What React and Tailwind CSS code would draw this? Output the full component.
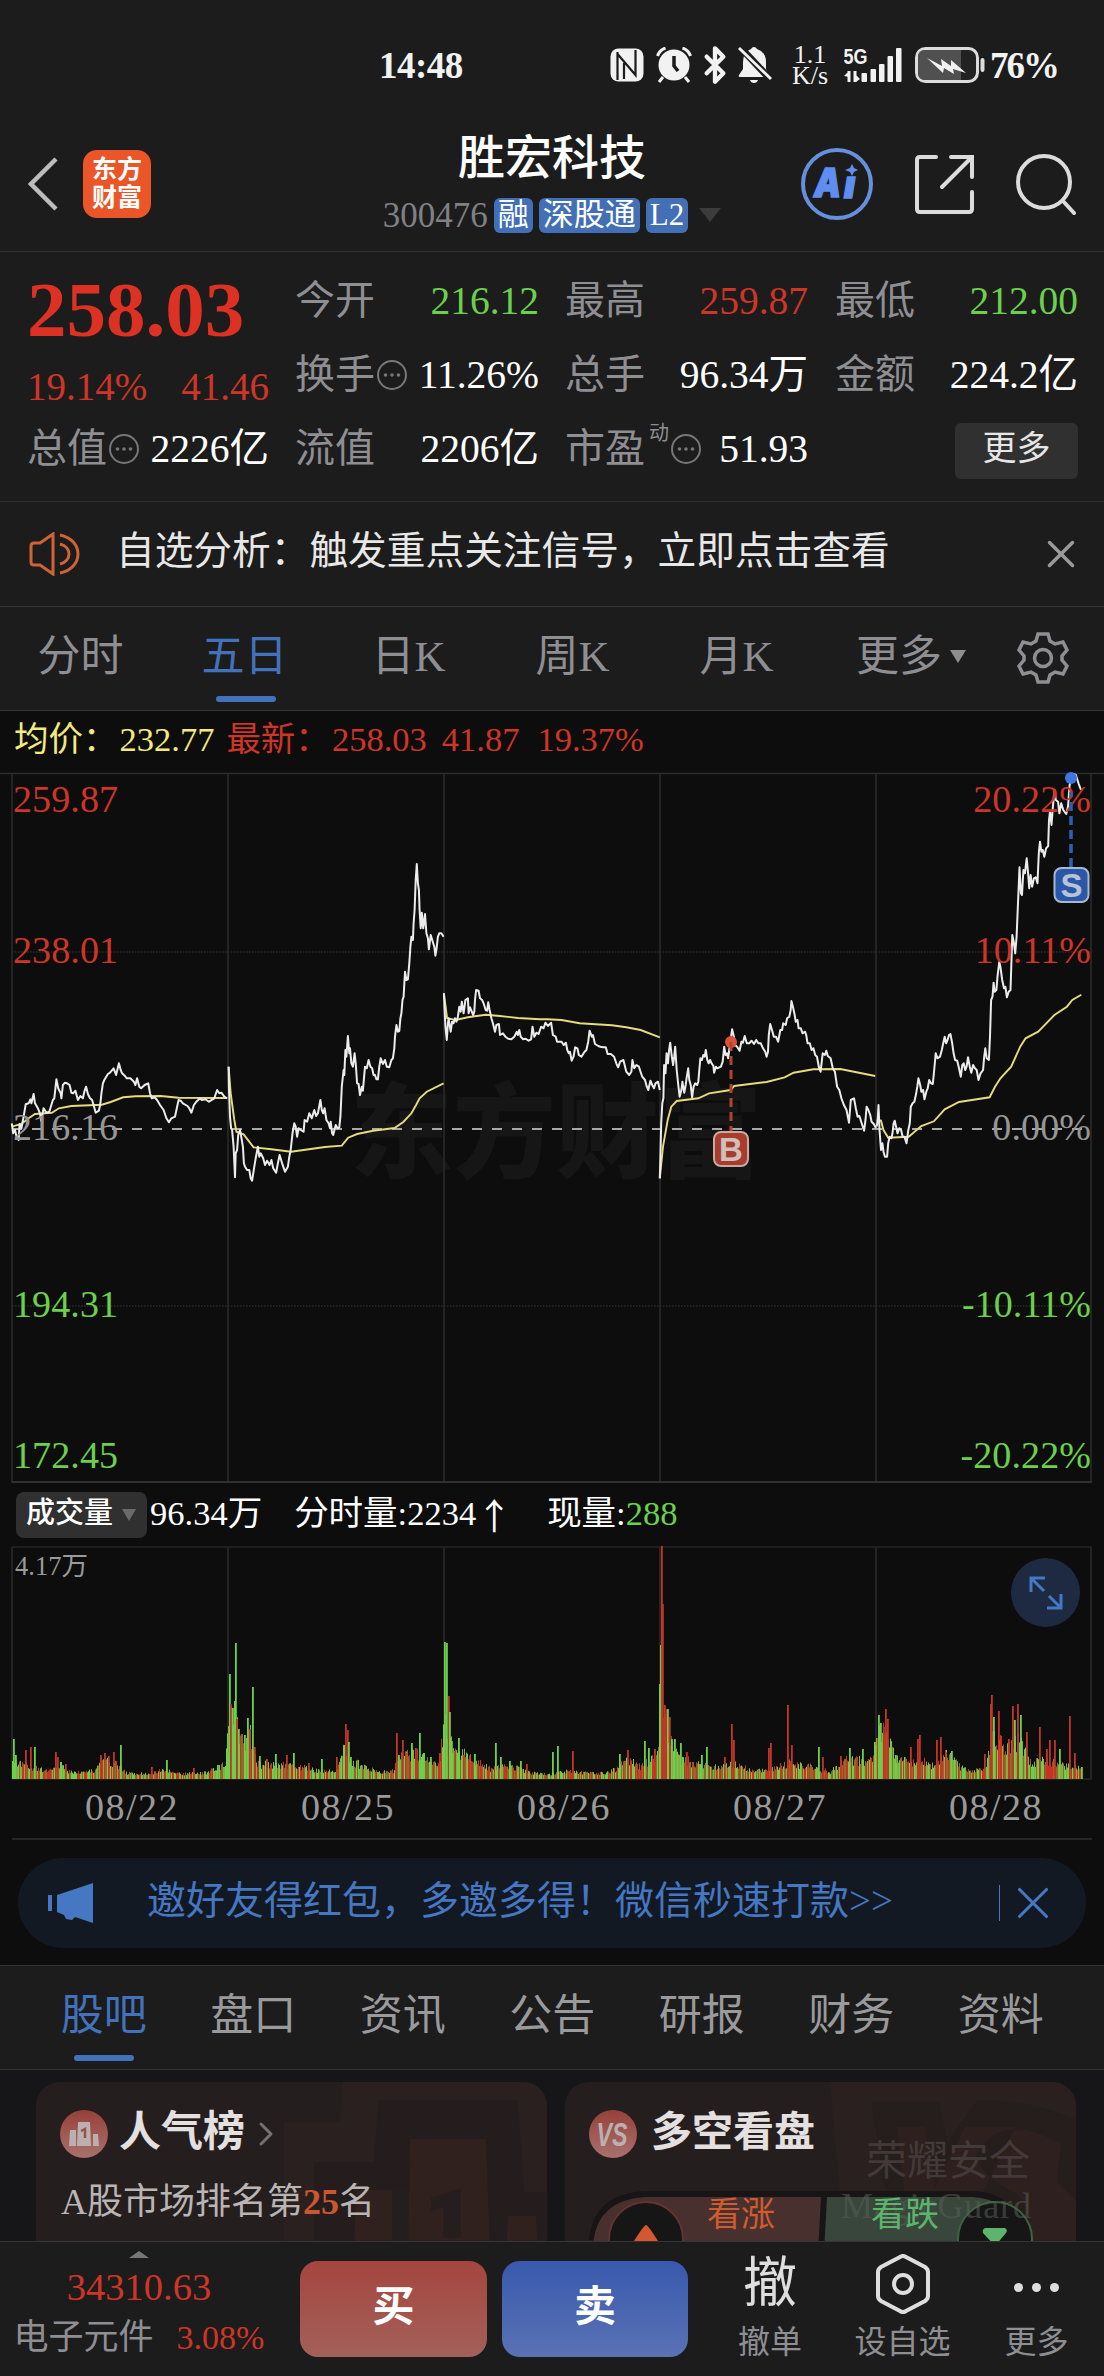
import React from 'react';
import { Bluetooth, X, ChevronRight } from 'lucide-react';

const RED = '#cf3527';
const GREEN = '#6bd04c';

const CHART_TOP = 770;

// price traces, pairs of x,y in the plot's own half-pane units
const LEFT = { origin: 0, unit: 0.35714 };
const RIGHT = { origin: 540, unit: 0.35969 };

const priceSeries = [
  [[LEFT, '33,1060 37,1090 42,1080 46,1098 52,1110 55,1062 60,1075 66,1040 72,1003 80,1000 85,988 88,1000 94,972 98,1000 106,1015 112,1030 115,1052 122,1015 130,1028 138,1025 148,990 152,985 158,928 163,955 170,970 172,985 176,945 182,938 188,940 195,945 200,968 205,970 211,962 218,990 225,978 232,985 236,965 241,950 246,972 252,985 258,990 262,1005 268,1028 277,1022 281,1000 284,970 288,940 292,930 302,912 308,908 318,895 325,915 333,880 338,900 342,910 350,918 355,925 365,925 375,935 379,945 384,925 390,950 395,955 405,945 415,940 420,970 425,985 433,982 440,990 448,1005 458,1020 466,1045 473,1057 480,1045 490,1040 495,1015 500,990 506,992 512,1000 525,1008 530,1015 536,1028 543,1005 550,995 560,985 565,990 575,988 585,995 600,985 608,960 614,970 620,968 628,980 636,985']],
  [[LEFT, '640,890 641,950 644,1040 647,1075 650,1080 654,1130 658,1222 660,1150 664,1140 667,1095 672,1080 677,1110 680,1130 683,1180 686,1190 692,1200 698,1200 702,1225 706,1232 712,1190 716,1165 722,1130 726,1160 730,1150 737,1165 742,1185 748,1172 755,1185 760,1170 765,1195 773,1208 778,1180 783,1155 790,1180 798,1205 806,1190 810,1160 814,1140 819,1090 824,1060 828,1070 832,1100 836,1075 842,1080 850,1085 853,1050 860,1055 866,1030 873,1045 880,1020 885,1038 890,1030 897,990 901,1020 905,1030 909,1015 914,1050 920,1060 924,1075 926,1055 930,1090 933,1095 940,1065 945,1075 950,1072 953,1040 957,950 962,900 964,915 967,840 970,860 974,798 978,850 980,835 984,880 988,890 993,850 996,880 1000,940 1004,942 1008,975 1013,950 1016,962 1022,890 1027,895 1032,870 1037,890 1042,895 1046,915 1050,915 1054,928 1058,928 1062,890 1066,865 1072,882 1078,870 1083,890 1090,892 1096,870 1100,865 1104,835 1106,800 1110,765 1114,785 1118,783 1121,745 1124,730 1127,690 1130,680 1134,605 1138,630 1142,628 1146,580 1149,530 1152,500 1156,510 1158,460 1161,420 1164,330 1167,282 1170,340 1173,360 1175,420 1178,475 1181,428 1185,475 1190,432 1194,490 1198,505 1201,538 1206,495 1213,520 1216,530 1219,557 1222,540 1226,500 1230,490 1236,490 1242,500']],
  [[LEFT, '1243,670 1245,720 1247,770 1251,810 1254,760 1256,745 1262,785 1266,755 1270,760 1274,745 1278,755 1282,740 1286,710 1290,725 1293,695 1298,730 1303,690 1310,685 1312,730 1316,712 1325,735 1328,725 1330,690 1333,660 1340,662 1344,685 1350,690 1354,700 1360,720 1364,722 1367,697 1371,720 1376,745 1380,760 1386,785 1390,765 1397,762 1400,795 1408,790 1415,800 1423,806 1432,808 1440,800 1447,785 1450,795 1454,780 1458,800 1465,808 1472,806 1480,812 1487,808 1491,770 1496,800 1502,788 1508,792 1515,770 1522,775 1527,758 1534,768 1543,758 1548,795 1556,800 1560,815'],
   [RIGHT, '60,815 66,825 72,818 76,840 80,850 83,845 88,872 93,860 98,832 104,835 108,855 115,860 124,845 129,840 134,815 138,782 144,800 147,795 153,822 162,828 168,830 175,832 183,832 188,852 197,852 206,860 212,880 217,892 223,875 232,870 240,905 248,915 254,905 257,870 262,895 268,885 275,890 284,920 292,930 297,950 301,960 307,932 312,945 317,955 321,940 328,935 333,960']],
  [[RIGHT, '333,1225 335,1150 337,1060 340,1000 343,985 345,885 349,910 352,850 356,880 359,840 362,818 366,855 370,885 373,860 376,830 380,900 384,940 388,980 393,960 396,935 401,968 405,945 408,920 412,895 415,930 419,945 423,982 427,950 432,940 437,945 440,935 443,900 446,865 450,870 454,855 458,860 461,840 465,870 469,880 473,870 477,880 482,888 484,908 489,890 493,895 503,890 508,875 512,830 516,855 520,850 523,865 530,810 534,778 539,800 542,825 548,830 555,842 560,815 564,818 569,798 575,820 582,820 588,812 595,822 601,810 607,820 614,820 620,835 626,845 630,860 634,845 636,795 640,762 645,780 650,800 656,800 662,815 668,780 673,780 676,760 683,765 687,745 693,740 697,720 699,693 703,710 708,735 711,755 716,750 719,775 725,775 730,790 737,785 740,795 744,820 750,820 755,840 760,835 765,855 770,860 775,890 780,905 786,850 792,855 796,842 800,858 808,865 814,895 820,905 826,950 832,960 838,985 845,1005 852,1020 859,1058 864,990 873,985 878,1015 883,1040 888,1038 893,1055 901,1082 905,1050 908,1010 913,1020 918,1035 922,1055 928,1062 934,1075']],
  [[RIGHT, '936,1070 939,1050 941,1005 944,1080 948,1140 952,1120 955,1145 959,1160 965,1160 968,1120 972,1100 977,1105 980,1090 983,1060 986,1052 990,1070 994,1090 999,1075 1004,1080 1008,1100 1013,1100 1019,1120 1024,1080 1028,1060 1031,1010 1036,1000 1041,995 1046,970 1049,950 1052,925 1057,945 1060,965 1065,960 1069,988 1074,965 1078,955 1082,930 1087,940 1092,942 1096,900 1100,850 1105,865 1112,860 1117,840 1121,820 1125,800 1129,820 1133,810 1137,795 1141,792 1146,820 1150,850 1154,870 1160,872 1165,895 1170,920 1174,885 1178,880 1182,900 1186,890 1190,862 1195,890 1199,908 1204,885 1209,895 1214,900 1219,930 1225,910 1232,900 1235,860 1238,835 1242,865 1248,870 1251,800 1254,690 1258,680 1261,638 1264,665 1269,660 1272,620 1277,575 1280,590 1285,630 1290,655 1294,650 1298,682 1303,665 1308,660 1311,560 1313,495 1317,515 1321,550 1325,500 1328,420 1331,350 1333,292 1337,370 1340,375 1344,300 1348,310 1353,265 1357,310 1360,355 1364,315 1368,350 1373,325 1378,322 1383,340 1385,290 1387,245 1390,215 1394,245 1398,240 1402,260 1407,235 1413,228 1415,150 1418,125 1422,165 1426,110 1430,60 1434,90 1440,95 1444,130 1449,100 1455,120 1463,132 1468,110 1472,50 1476,20 1483,12 1490,15 1497,40 1504,60']],
];

const averageSeries = [
  [[LEFT, '33,1070 60,1062 80,1045 98,1032 145,1028 165,1015 200,1008 285,1004 310,996 345,982 380,979 450,978 500,983 636,984']],
  [[LEFT, '640,890 646,970 656,1050 662,1085 682,1093 710,1132 760,1138 815,1145 850,1140 910,1131 957,1127 966,1115 975,1103 1000,1092 1045,1082 1105,1074 1130,1055 1152,1030 1165,1005 1175,985 1195,965 1242,940']],
  [[LEFT, '1243,670 1252,745 1275,750 1310,742 1360,734 1400,738 1450,744 1512,748'], [RIGHT, '20,748 60,750 110,760 200,766 240,772 280,780 333,802']],
  [[RIGHT, '333,1225 342,1130 355,1050 365,1010 380,993 440,985 470,970 530,960 540,948 630,936 680,922 705,908 760,898 835,897 932,918']],
  [[RIGHT, '936,1050 948,1052 955,1080 968,1103 1025,1100 1060,1068 1095,1054 1125,1018 1165,996 1250,982 1265,950 1280,925 1310,890 1335,830 1350,805 1385,785 1430,735 1465,710 1480,690 1505,674']],
];

const toPoints = (parts) =>
  parts
    .flatMap(([pane, text]) =>
      text.split(' ').map((pair) => {
        const [x, y] = pair.split(',').map(Number);
        return `${(pane.origin + x * pane.unit).toFixed(1)},${(y / 3 + CHART_TOP - 772).toFixed(1)}`;
      })
    )
    .join(' ');

// typical volume along the axis: x, height
const volumeBase = [
  [12, 16], [45, 8], [60, 14], [68, 7], [95, 8], [100, 18], [118, 14], [125, 6], [145, 5], [165, 9], [180, 5], [205, 6],
  [225, 14], [229, 65], [237, 50], [243, 32], [250, 42], [256, 18], [262, 14], [275, 15], [300, 12], [320, 8], [335, 7],
  [344, 30], [350, 18], [370, 10], [378, 6], [393, 8], [398, 20], [415, 26], [430, 16], [440, 18], [444, 70], [449, 35],
  [460, 26], [475, 18], [490, 10], [510, 13], [530, 6], [550, 5], [570, 8], [585, 6], [605, 6], [617, 10], [627, 20],
  [640, 12], [657, 22], [660, 90], [665, 60], [672, 35], [680, 20], [700, 14], [715, 12], [735, 14], [755, 8], [765, 8],
  [790, 16], [810, 12], [830, 7], [845, 18], [872, 18], [878, 48], [888, 40], [895, 20], [910, 16], [920, 18], [935, 12],
  [945, 25], [960, 12], [970, 8], [985, 10], [991, 40], [1000, 35], [1010, 30], [1020, 40], [1030, 16], [1045, 18],
  [1060, 14], [1082, 10],
];

const volumeSpikes =
  '13,40,g 15,24,g 25,29,r 30,32,r 34,32,g 55,27,r 57,22,r 65,15,r 100,24,r 104,26,r 108,23,r 113,27,r 120,34,g 151,12,r 166,19,g 193,11,r 217,14,g 227,26,g 229,105,g 230,75,r 232,71,g 234,78,g 235,136,g 236,60,r 238,50,g 244,44,g 247,61,g 249,50,r 252,92,g 254,32,r 259,23,g 266,20,r 275,25,g 286,24,r 293,26,g 308,16,r 321,20,g 336,22,r 343,33,g 345,55,r 347,49,r 348,37,g 350,22,g 396,46,r 398,24,g 402,39,r 405,26,r 411,36,g 415,31,r 419,46,g 423,26,g 430,22,g 439,26,r 443,46,g 444,137,g 446,136,g 448,83,r 449,67,g 451,38,g 458,41,g 463,24,r 474,25,g 495,36,g 500,22,g 509,18,g 520,18,g 526,15,r 552,27,g 557,33,g 572,28,r 619,25,g 627,29,r 644,38,g 648,31,g 654,30,r 659,95,g 660,134,g 661,233,r 662,175,r 664,74,r 665,65,r 667,70,g 669,62,r 671,40,g 674,40,g 680,36,g 686,27,r 701,24,g 706,32,g 724,22,r 731,55,r 733,39,r 768,31,r 770,36,r 787,74,r 791,34,r 818,32,g 822,22,r 840,23,r 849,31,g 862,30,g 874,37,g 878,64,g 880,56,g 883,52,r 885,70,r 887,60,r 895,24,g 910,32,r 917,40,r 919,44,r 936,39,r 940,42,r 945,27,r 951,28,g 984,25,r 990,75,r 991,84,r 993,62,g 998,68,r 1000,40,r 1008,40,r 1012,73,r 1014,59,g 1017,75,r 1020,64,g 1026,47,r 1039,52,r 1046,30,r 1049,39,r 1054,39,r 1059,30,g 1069,63,r 1074,26,r 1081,12,g'
    .split(' ')
    .map((s) => s.split(','));

const noise = (i) => {
  const n = Math.sin(i * 127.1 + 11.7) * 43758.5453;
  return n - Math.floor(n);
};

const baseAt = (x) => {
  const i = Math.max(1, volumeBase.findIndex(([px]) => px >= x));
  const [x0, h0] = volumeBase[i - 1];
  const [x1, h1] = volumeBase[i];
  return h0 + ((x - x0) / (x1 - x0)) * (h1 - h0);
};

const barColors = ['#d0301f', '#6bd04c', '#84b03f', '#8f6a2b'];

const bars = Array.from({ length: 1069 }, (_, i) => {
  const x = 12 + i;
  return { x, h: baseAt(x) * (0.7 + noise(i) * 0.6), color: barColors[Math.floor(noise(i + 5000) * 4)] };
});

const gridX = [12, 228, 444, 660, 876, 1091];

const Dots = () => (
  <svg viewBox="0 0 30 30" className="w-[30px] h-[30px] ml-[2px] shrink-0" fill="none" stroke="#77777a" strokeWidth="2">
    <circle cx="15" cy="15" r="14" />
    <g fill="#77777a" stroke="none">
      <circle cx="8.500" cy="15" r="1.800" />
      <circle cx="15" cy="15" r="1.800" />
      <circle cx="21.500" cy="15" r="1.800" />
    </g>
  </svg>
);

const Stat = ({ label, value, color = 'text-white', info, sup }) => (
  <div className="flex items-center justify-between h-[74px] text-[40px]">
    <span className="flex items-center text-[#8e8e93] whitespace-nowrap">
      {label}
      {sup && <span className="text-[20px] ml-1 mb-8">{sup}</span>}
      {info && <Dots />}
    </span>
    <span className={`${color} whitespace-nowrap pt-[2px] text-[39.500px]`}>{value}</span>
  </div>
);

const StatusBar = () => (
  <div className="h-[130px] flex items-center pl-[379px] pr-[46px] text-[#f2f2f2]">
    <span className="text-[37px] font-bold tracking-[-0.5px]">14:48</span>
    <div className="ml-auto flex items-center">
      <svg viewBox="0 0 34 34" className="w-[34px] h-[34px]">
        <rect x="0.500" y="0.500" width="33" height="33" rx="8" fill="#f2f2f2" />
        <path d="M7.500 4v28M7.500 6l18 21V2M14 31V15" fill="none" stroke="#1c1c1c" strokeWidth="2.200" />
      </svg>
      <svg viewBox="0 0 36 36" className="w-[36px] h-[36px] ml-[12px]">
        <circle cx="18" cy="18" r="15.500" fill="#f2f2f2" />
        <path d="M7 30l-4 5M29 30l4 5M1.500 9q2-6 8-8M34.500 9q-2-6-8-8" stroke="#f2f2f2" strokeWidth="3" fill="none" />
        <path d="M18 9v10l4 5" stroke="#1c1c1c" strokeWidth="3.500" fill="none" />
      </svg>
      <Bluetooth className="w-[40px] h-[40px] ml-[3px]" strokeWidth={2.600} />
      <svg viewBox="0 0 34 38" className="w-[34px] h-[38px] ml-[3px]">
        <path d="M16 1q2 0 3 2 9 3 9 13v7l3 6q0 2-2 2H2q-2 0-1-2l4-6v-7q0-10 8-13 1-2 3-2zM12 34h8q-1 3-4 3t-4-3z" fill="#f2f2f2" />
        <path d="M0-1l34 36" stroke="#1c1c1c" strokeWidth="7" />
        <path d="M1 2l32 31" stroke="#f2f2f2" strokeWidth="3" />
      </svg>
      <div className="flex flex-col items-center text-[26px] leading-[19px] gap-[2px] ml-[18px] w-[40px]">
        <span className="h-[19px]">1.1</span>
        <span className="h-[19px]">K/s</span>
      </div>
      <svg viewBox="0 0 58 36" className="w-[58px] h-[36px] ml-[14px]" fill="#f2f2f2">
        <text x="-0.500" y="17" fontSize="22" fontWeight="bold" fontFamily="Liberation Sans" textLength="24" lengthAdjust="spacingAndGlyphs">5G</text>
        <path d="M3.500 24h3v11h-3zM0 29l5-5v6zM9.500 24h3v11h-3zM12 35v-7l4 4z" />
        <rect x="17.500" y="26" width="5.500" height="9" rx="1" />
        <rect x="26.500" y="22" width="5.500" height="13" rx="1" />
        <rect x="35" y="17" width="5.500" height="18" rx="1" />
        <rect x="43.500" y="9" width="5.500" height="26" rx="1" />
        <rect x="52" y="1" width="5.500" height="34" rx="1" />
      </svg>
      <svg viewBox="0 0 71 36" className="w-[71px] h-[36px] ml-[13px]">
        <rect x="1.500" y="1.500" width="61" height="33" rx="9" fill="#222" stroke="#dcdcdc" strokeWidth="3" />
        <path d="M10 3h36v30H10q-7 0-7-7V10q0-7 7-7z" fill="#505050" />
        <rect x="65.500" y="11" width="4" height="14" rx="2" fill="#dcdcdc" />
        <path d="M12 11l15 8-1-7 10 7 0-6 15 13-13-4 1 5-10-6-1 5z" fill="#f2f2f2" />
      </svg>
      <span className="text-[37px] font-bold tracking-[-2px] ml-1">76%</span>
    </div>
  </div>
);

const Tag = ({ children }) => (
  <span className="h-[35px] px-[4px] rounded-[6px] bg-[#426fb5] text-white text-[31px] leading-[33px] ml-[6px]">{children}</span>
);

const Header = () => (
  <div className="h-[122px] flex items-center justify-between px-[28px] border-b border-[#333]">
    <div className="flex items-center w-[300px] mt-[-14px]">
      <svg viewBox="0 0 30 54" className="w-[30px] h-[54px]" fill="none" stroke="#bdbdbd" strokeWidth="4.500">
        <path d="M28 2L3 27l25 25" />
      </svg>
      <div className="ml-[25px] w-[68px] h-[68px] rounded-[14px] bg-[#ea5628] text-white text-[25px] font-bold leading-[28px] flex flex-col items-center justify-center">
        <span>东方</span>
        <span>财富</span>
      </div>
    </div>
    <div className="flex flex-col items-center mt-[-10px]">
      <div className="text-[47px] leading-[56px] text-white mt-[-6px] font-medium">胜宏科技</div>
      <div className="flex items-center h-[40px] mt-[9px] text-[35px] text-[#808085]">
        300476
        <Tag>融</Tag>
        <Tag>深股通</Tag>
        <Tag>L2</Tag>
        <span className="ml-[11px] border-x-[11px] border-x-transparent border-t-[14px] border-t-[#3c3c3c]" />
      </div>
    </div>
    <div className="flex items-center justify-end w-[300px] mt-[-14px]">
      <svg viewBox="0 0 74 74" className="w-[74px] h-[74px]">
        <circle cx="37" cy="37" r="34" fill="none" stroke="#6690dc" strokeWidth="4" />
        <g fontSize="40" fontWeight="900" fontStyle="italic" fontFamily="Inter" fill="#5f8df0" stroke="#5f8df0" strokeWidth="1.500">
          <text x="14" y="50" textLength="27" lengthAdjust="spacingAndGlyphs">A</text>
          <text x="44" y="51" fontSize="38">ı</text>
        </g>
        <path d="M52 17l2 4 4 2-4 2-2 4-2-4-5-2 5-2z" fill="#5f8df0" />
      </svg>
      <svg viewBox="0 0 60 60" className="w-[60px] h-[60px] ml-[40px]" fill="none" stroke="#dcdcdc" strokeWidth="4" strokeLinecap="round">
        <path d="M22 3H6q-3 0-3 3v49q0 3 3 3h49q3 0 3-3V38M37 3h21v20M57 4L28 33" />
      </svg>
      <svg viewBox="0 0 62 62" className="w-[62px] h-[62px] ml-[42px] mr-[-2px]" fill="none" stroke="#dcdcdc" strokeWidth="4" strokeLinecap="round">
        <circle cx="28" cy="29" r="26" />
        <path d="M47 48l11 12" />
      </svg>
    </div>
  </div>
);

const Quote = () => (
  <div className="h-[250px] border-b border-[#2e2e2e] flex pl-[27px] pr-[25px] pt-[12px]">
    <div className="w-[242px]">
      <div className="h-[90px] text-[79px] leading-[92px] font-bold text-[#dc3123]">258.03</div>
      <div className="h-[58px] flex items-center justify-between pt-[6px] text-[39px] text-[#cf3527]">
        <span>19.14%</span>
        <span>41.46</span>
      </div>
      <Stat label="总值" value="2226亿" info />
    </div>
    <div className="w-[244px] ml-[26px]">
      <Stat label="今开" value="216.12" color="text-[#6bd04c]" />
      <Stat label="换手" value="11.26%" info />
      <Stat label="流值" value="2206亿" />
    </div>
    <div className="w-[243px] ml-[26px]">
      <Stat label="最高" value="259.87" color="text-[#cf3527]" />
      <Stat label="总手" value="96.34万" />
      <Stat label="市盈" value="51.93" sup="动" info />
    </div>
    <div className="w-[243px] ml-[27px]">
      <Stat label="最低" value="212.00" color="text-[#6bd04c]" />
      <Stat label="金额" value="224.2亿" />
      <div className="flex justify-end items-center h-[74px]">
        <button className="w-[123px] h-[56px] rounded-[6px] bg-[#303030] text-[#e6e6e6] text-[34px] pb-1 mt-1">更多</button>
      </div>
    </div>
  </div>
);

const Notice = () => (
  <div className="h-[105px] border-b border-[#333] flex items-center pl-[29px] pr-[28px]">
    <svg viewBox="0 0 52 44" className="w-[52px] h-[44px]" fill="none" stroke="#cf6333" strokeWidth="3">
      <path d="M24 2v40L11 33H5q-3 0-3-3V14q0-3 3-3h6zM31 3c24 5 24 33 0 38M31 12c12 3 12 17 0 20" />
    </svg>
    <span className="ml-[35px] text-[38.700px] text-[#e8e8e8] pb-[6px]">自选分析：触发重点关注信号，立即点击查看</span>
    <X className="ml-auto w-[46px] h-[46px] mr-[-8px] text-[#9a9a9a]" strokeWidth={1.800} />
  </div>
);

const periods = ['分时', '五日', '日K', '周K', '月K'];

const PeriodTabs = () => (
  <div className="h-[104px] border-b border-[#333] flex text-[43px] text-[#8e8e93]">
    {periods.map((p) => (
      <div key={p} className={`w-[164px] flex flex-col items-center ${p === '五日' ? 'text-[#4272bb]' : ''}`}>
        <span className="h-[89px] leading-[100px] mr-[3px]">{p}</span>
        {p === '五日' && <span className="w-[60px] h-[6px] rounded-full bg-[#4272bb]" />}
      </div>
    ))}
    <div className="ml-[36px] flex items-center pb-1 w-[161px]">
      更多
      <span className="ml-[8px] border-x-[8px] border-x-transparent border-t-[13px] border-t-[#8e8e93]" />
    </div>
    <svg viewBox="0 0 52 52" className="w-[52px] h-[52px] mt-[25px]" fill="none" stroke="#8e8e93" strokeWidth="3.500">
      <path d="M21 2h10l2 7 5 3 8-2 4 8-5 6v4l5 6-4 8-8-2-5 3-2 7H21l-2-7-5-3-8 2-4-8 5-6v-4l-5-6 4-8 8 2 5-3z" />
      <circle cx="26" cy="26" r="8.500" />
    </svg>
  </div>
);

const PriceChart = () => (
  <div className="h-[711px] relative">
    <svg viewBox="0 0 1104 711" className="w-[1104px] h-[711px] block">
      <text x="350" y="398" fontSize="103" fontWeight="900" fontFamily="Noto Sans CJK SC" fill="#161616">东方财富</text>
      <path d="M0 1.500h1104" stroke="#2e2e2e" strokeWidth="1.500" />
      {gridX.map((x) => (
        <path key={x} d={`M${x} 2v709`} stroke="#242424" strokeWidth="2" />
      ))}
      <path d="M12 180H1091M12 534H1091" stroke="#2b2b2b" strokeWidth="1.500" strokeDasharray="1.500 1.500" />
      <path d="M12 710H1092" stroke="#303030" strokeWidth="2" />
      <path d="M12 357H1091" stroke="#a8a8a8" strokeWidth="2" strokeDasharray="10 10" />
      {averageSeries.map((s, i) => (
        <polyline key={i} points={toPoints(s)} fill="none" stroke="#e5dc7c" strokeWidth="1.900" />
      ))}
      {priceSeries.map((s, i) => (
        <polyline key={i} points={toPoints(s)} fill="none" stroke="#ececec" strokeWidth="2" strokeLinejoin="round" />
      ))}
      <g fontSize="38" fontFamily="Liberation Serif" letterSpacing="0.100">
        <text x="13" y="40" fill={RED}>259.87</text>
        <text x="13" y="191" fill={RED}>238.01</text>
        <text x="13" y="368" fill="#969696">216.16</text>
        <text x="13" y="545" fill={GREEN}>194.31</text>
        <text x="13" y="696" fill={GREEN}>172.45</text>
        <g textAnchor="end">
          <text x="1091" y="40" fill={RED}>20.22%</text>
          <text x="1091" y="191" fill={RED}>10.11%</text>
          <text x="1091" y="368" fill="#969696">0.00%</text>
          <text x="1091" y="545" fill={GREEN}>-10.11%</text>
          <text x="1091" y="696" fill={GREEN}>-20.22%</text>
        </g>
      </g>
      <circle cx="731" cy="270" r="6" fill="#db5038" />
      <path d="M731 270v90" stroke="#b3432f" strokeWidth="3" strokeDasharray="9 5" />
      <circle cx="1071" cy="6" r="6" fill="#3c78e0" />
      <path d="M1071 20v76" stroke="#2f5fb4" strokeWidth="3.500" strokeDasharray="9 5" strokeDashoffset="4" />
      <g fontSize="33" fontWeight="bold" fontFamily="Liberation Sans" textAnchor="middle" strokeWidth="2">
        <rect x="714" y="360" width="34" height="34" rx="7" fill="#a83c2d" stroke="#c9a9a4" />
        <text x="731" y="389" fill="#cfc0be">B</text>
        <rect x="1054.500" y="96" width="34" height="34" rx="7" fill="#2b57a8" stroke="#a9b7d0" />
        <text x="1071.500" y="125" fill="#b9c3d6">S</text>
      </g>
    </svg>
  </div>
);

const VolumeChart = () => (
  <>
    <div className="h-[63px] flex items-center pl-[16px] text-[34.500px] text-white whitespace-nowrap">
      <div className="w-[131px] h-[46px] rounded-[8px] bg-[#303030] flex items-center pl-[10px] pb-[3px] text-[29px] font-medium">
        成交量
        <span className="ml-[9px] mt-[3px] border-x-[7px] border-x-transparent border-t-[12px] border-t-[#6a6a6a]" />
      </div>
      <span className="ml-[3px] pb-[2px]">96.34万</span>
      <span className="ml-[32px] pb-[2px] flex w-[253px]">分时量:2234<span className="ml-auto mr-[37px] text-[36px] font-['Noto_Sans_CJK_SC']">↑</span></span>
      <span className="pb-[2px]">现量:<span className="text-[#6bd04c]">288</span></span>
    </div>
    <div className="h-[234px] relative">
      <svg viewBox="0 0 1104 234" className="w-[1104px] h-[234px] block">
        <path d="M12 1H1092M12 233H1092" stroke="#262626" strokeWidth="1.500" />
        {gridX.map((x) => (
          <path key={x} d={`M${x} 1v232`} stroke="#242424" strokeWidth="2" />
        ))}
        {bars.map((b) => (
          <rect key={b.x} x={b.x} y={233 - b.h} width="1" height={b.h} fill={b.color} />
        ))}
        {volumeSpikes.map(([x, h, c], i) => (
          <rect key={i} x={x} y={233 - h} width="1.800" height={h} fill={c === 'r' ? '#c13626' : GREEN} />
        ))}
        <text x="15" y="29" fontSize="26.500" fontFamily="Liberation Serif, Noto Sans CJK SC" fill="#9a9a9a">4.17万</text>
      </svg>
      <div className="absolute left-[1011px] top-[12px] w-[69px] h-[69px] rounded-full bg-[#1d2a42] flex items-center justify-center">
        <svg viewBox="0 0 34 34" className="w-[34px] h-[34px]" fill="none" stroke="#4577c2" strokeWidth="3">
          <path d="M2 16V2h14M3 3l12 12M32 18v14H18M31 31L20 20" />
        </svg>
      </div>
    </div>
    <div className="h-[58px] flex pl-[24px] text-[38px] tracking-[1.500px] text-[#9a9a9a]">
      {['08/22', '08/25', '08/26', '08/27', '08/28'].map((d) => (
        <span key={d} className="w-[216px] text-center leading-[54px]">{d}</span>
      ))}
    </div>
    <div className="h-[2px] mx-[12px] bg-[#262626]" />
  </>
);

const Banner = () => (
  <div className="mt-[18px] mx-[18px] h-[90px] rounded-full bg-[#121923] text-[#4577c2] flex items-center pl-[29px] pr-[30px]">
    <svg viewBox="0 0 48 40" className="w-[48px] h-[40px]" fill="#4577c2">
      <path d="M1 12h4v16H1zM10 12L46 0v40l-18-6-3 3-6-1-2-4-7-3z" />
    </svg>
    <span className="ml-[52px] text-[39px] pb-[6px] whitespace-nowrap">邀好友得红包，多邀多得！微信秒速打款&gt;&gt;</span>
    <span className="ml-auto w-[1.500px] h-[36px] bg-[#4577c2]" />
    <X className="w-[54px] h-[54px] ml-[6px] mr-[-4px]" strokeWidth={1.400} />
  </div>
);

const sections = ['股吧', '盘口', '资讯', '公告', '研报', '财务', '资料'];

const SectionTabs = () => (
  <div className="mt-[17px] h-[105px] border-y border-[#333] bg-[#1c1c1c] flex pl-[29px] text-[43px] text-[#9a9a9d]">
    {sections.map((s, i) => (
      <div key={s} className={`w-[149.500px] flex flex-col items-center ${i === 0 ? 'text-[#4272bb]' : ''}`}>
        <span className="h-[89px] leading-[100px]">{s}</span>
        {i === 0 && <span className="w-[60px] h-[6px] rounded-full bg-[#4272bb]" />}
      </div>
    ))}
  </div>
);

const Cards = () => (
  <div className="h-[171px] bg-[#161618] pt-[12px] pl-[36px] flex gap-[18px] overflow-hidden">
    <div className="relative w-[511px] h-[240px] rounded-[24px] bg-[#251e1e] overflow-hidden">
      <svg viewBox="0 0 511 170" className="absolute left-0 top-0 w-[511px] h-[170px]">
        <path d="M306 0h205v170H454V110h-10V18H342v62H278v90h-30V40h56z" fill="#2a201f" />
        <path d="M342 18h140l6 92h23v60h-70V57h-67v51h-38v62h-58V80h60z" fill="#251d1d" />
        <path d="M374 57h76l4 113h-82zM320 108h36v62h-38zM472 134h28l2 36h-32z" fill="#30201e" />
        <path d="M395 116l30-10v50h-18v-30l-12 3z" fill="#261e1e" />
      </svg>
      <div className="relative flex items-center pl-[24px] h-[100px]">
        <svg viewBox="0 0 48 48" className="w-[48px] h-[48px] mt-1">
          <defs>
            <linearGradient id="badge" x2="0" y2="1">
              <stop stopColor="#96413a" />
              <stop offset="1" stopColor="#a8716c" />
            </linearGradient>
          </defs>
          <circle cx="24" cy="24" r="24" fill="url(#badge)" />
          <path d="M18 12h12l1 24H17zM10 20h6v16H9zM33 24h5l1 12h-6z" fill="#bbb0af" />
          <path d="M21 21l4-2v9" fill="none" stroke="#97504a" strokeWidth="2.500" />
        </svg>
        <span className="ml-[11px] text-[42px] font-bold text-[#e4e0e0]">人气榜</span>
        <ChevronRight className="w-[40px] h-[40px] ml-[1px] mt-1 text-[#77706f]" strokeWidth={1.800} />
      </div>
      <div className="relative pl-[25px] text-[36px] leading-[40px] text-[#b9b5b5]">
        A股市场排名第<span className="text-[#cb5730] font-bold">25</span>名
      </div>
    </div>
    <div className="relative w-[511px] h-[240px] rounded-[24px] bg-[#251e1e] overflow-hidden">
      <svg viewBox="0 0 511 170" className="absolute left-0 top-0 w-[511px] h-[170px]">
        <path d="M265 0h246v170H280z" fill="#2a201f" />
        <path d="M306 20h68l8 40 30-42q60 0 99 20v132H330z" fill="#261e1d" />
        <path d="M332 45h28l10 60 30-60h50l-62 125h-42zM496 62q-60-34-84 10 0 20 40 40 20 20 10 58h50V120l-20-20z" fill="#2e201e" />
        <path d="M24 158q4-46 56-49h330q48 3 52 61z" fill="#171515" />
        <path d="M28 162q4-44 52-47h176l-3 55H28z" fill="#47302e" />
        <path d="M262 115h146q46 3 50 55H259z" fill="#38463b" />
        <circle cx="81" cy="157" r="37" fill="#161616" stroke="#65332d" strokeWidth="2" />
        <circle cx="430" cy="157" r="37" fill="#161616" stroke="#3d6343" strokeWidth="2" />
        <path d="M81 143q2 0 12 16v12H69v-12q10-16 12-16z" fill="#d4582f" />
        <path d="M420 146h20q3 2 1 5l-11 13-12-13q-1-4 2-5z" fill="#5cb56b" />
        <g fontFamily="Liberation Serif, Noto Sans CJK SC">
          <text x="301" y="93" fontSize="41" fill="#433938">荣耀安全</text>
          <text x="276" y="136" fontSize="36" fill="#596058" fillOpacity="0.550" textLength="190">MagicGuard</text>
          <text x="142" y="144" fontSize="34" fill="#cf5c30">看涨</text>
          <text x="306" y="144" fontSize="34" fill="#5cb56b">看跌</text>
        </g>
      </svg>
      <div className="relative flex items-center pl-[24px] h-[100px]">
        <svg viewBox="0 0 48 48" className="w-[48px] h-[48px] mt-1">
          <circle cx="24" cy="24" r="24" fill="url(#badge)" />
          <text x="23" y="36" fontSize="33" fontWeight="bold" fontStyle="italic" fontFamily="Liberation Sans" fill="#bbb0af" textAnchor="middle" textLength="31" lengthAdjust="spacingAndGlyphs">VS</text>
        </svg>
        <span className="ml-[14px] text-[41px] font-bold text-[#e4e0e0]">多空看盘</span>
      </div>
    </div>
  </div>
);

const BottomBar = () => (
  <div className="h-[136px] border-t border-[#353535] flex">
    <div className="w-[278px] flex flex-col items-center pt-[9px] whitespace-nowrap">
      <span className="border-x-[10px] border-x-transparent border-b-[7px] border-b-[#77777a]" />
      <span className="text-[38.500px] leading-[44px] mt-[7px] text-[#cf3527]">34310.63</span>
      <div className="flex items-center text-[35px] leading-[46px] mt-[6px] text-[#8e8e93]">
        电子元件<span className="ml-[23px] text-[34px] text-[#cf3527]">3.08%</span>
      </div>
    </div>
    <button className="ml-[22px] mt-[19px] w-[187px] h-[96px] rounded-[18px] bg-linear-to-b from-[#a4453e] to-[#a3605a] text-white text-[42px] font-bold pb-1">买</button>
    <button className="ml-[15px] mt-[19px] w-[186px] h-[96px] rounded-[18px] bg-linear-to-b from-[#3959ae] to-[#5a72b4] text-white text-[42px] font-bold pb-1">卖</button>
    <div className="ml-[16px] w-[132px] flex flex-col items-center text-[#8e8e93] text-[32px]">
      <span className="h-[77px] text-[54px] leading-[84px] text-[#dedede]">撤</span>
      <span className="leading-[46px]">撤单</span>
    </div>
    <div className="w-[133px] flex flex-col items-center text-[#8e8e93] text-[32px]">
      <span className="h-[77px] pt-[12px]">
        <svg viewBox="0 0 54 60" className="w-[54px] h-[60px]" fill="none" stroke="#dedede" strokeWidth="4">
          <path d="M24 3q3-2 6 0l19 10q3 2 3 5v24q0 3-3 5L30 57q-3 2-6 0L5 47q-3-2-3-5V18q0-3 3-5z" />
          <circle cx="27" cy="30" r="9" />
        </svg>
      </span>
      <span className="leading-[46px]">设自选</span>
    </div>
    <div className="w-[135px] flex flex-col items-center text-[#8e8e93] text-[32px]">
      <span className="h-[77px] flex items-center gap-[9px] pt-[14px]">
        <i className="w-[9px] h-[9px] rounded-full bg-[#dedede]" />
        <i className="w-[9px] h-[9px] rounded-full bg-[#dedede]" />
        <i className="w-[9px] h-[9px] rounded-full bg-[#dedede]" />
      </span>
      <span className="leading-[46px]">更多</span>
    </div>
  </div>
);

const App = () => {
  return (
    <div className="w-[1104px] h-[2376px] overflow-hidden bg-[#1c1c1c] leading-none font-['Liberation_Serif','Noto_Sans_CJK_SC',serif]">
      <StatusBar />
      <Header />
      <Quote />
      <Notice />
      <PeriodTabs />
      <div className="bg-[#0d0d0d]">
        <div className="h-[61px] flex items-center pl-[14px] pb-[4px] text-[34.500px] whitespace-nowrap text-[#cf3527]">
          <span className="text-[#f3ea7c]">均价：<span className="ml-[2px]">232.77</span></span>
          <span className="ml-[12px]">最新：<span className="ml-[2px]">258.03</span></span>
          <span className="ml-[15px]">41.87</span>
          <span className="ml-[18px]">19.37%</span>
        </div>
        <PriceChart />
        <VolumeChart />
        <div className="flow-root">
          <Banner />
          <SectionTabs />
        </div>
      </div>
      <Cards />
      <BottomBar />
    </div>
  );
};

export default App;
